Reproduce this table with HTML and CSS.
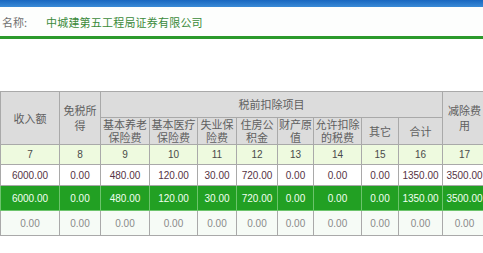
FILE: index.html
```html
<!DOCTYPE html>
<html lang="zh">
<head>
<meta charset="utf-8">
<link rel="stylesheet" href="styles.css">
</head>
<body>
<div class="topbar"></div>
<div class="namebar">
  <span class="label">名称:</span>
  <span class="company">中城建第五工程局证券有限公司</span>
</div>
<div class="rule"></div>
<div class="wrap">
<table class="grid">
  <colgroup>
    <col style="width:59px"><col style="width:41px"><col style="width:49px"><col style="width:48px">
    <col style="width:39px"><col style="width:41px"><col style="width:36px"><col style="width:48px">
    <col style="width:37px"><col style="width:44px"><col style="width:44px">
  </colgroup>
  <thead>
    <tr class="h1">
      <th rowspan="2">收入额</th>
      <th rowspan="2">免税所得</th>
      <th colspan="8">税前扣除项目</th>
      <th rowspan="2" class="wide">减除费用</th>
    </tr>
    <tr class="h2">
      <th>基本养老保险费</th>
      <th>基本医疗保险费</th>
      <th>失业保险费</th>
      <th>住房公积金</th>
      <th>财产原值</th>
      <th>允许扣除的税费</th>
      <th>其它</th>
      <th>合计</th>
    </tr>
    <tr class="nums">
      <td>7</td><td>8</td><td>9</td><td>10</td><td>11</td><td>12</td><td>13</td><td>14</td><td>15</td><td>16</td><td>17</td>
    </tr>
  </thead>
  <tbody>
    <tr class="r1">
      <td>6000.00</td><td>0.00</td><td>480.00</td><td>120.00</td><td>30.00</td><td>720.00</td><td>0.00</td><td>0.00</td><td>0.00</td><td>1350.00</td><td>3500.00</td>
    </tr>
    <tr class="sel">
      <td>6000.00</td><td>0.00</td><td>480.00</td><td>120.00</td><td>30.00</td><td>720.00</td><td>0.00</td><td>0.00</td><td>0.00</td><td>1350.00</td><td>3500.00</td>
    </tr>
    <tr class="r3">
      <td>0.00</td><td>0.00</td><td>0.00</td><td>0.00</td><td>0.00</td><td>0.00</td><td>0.00</td><td>0.00</td><td>0.00</td><td>0.00</td><td>0.00</td>
    </tr>
  </tbody>
</table>
</div>
</body>
</html>
```
FILE: styles.css
```css
html, body {
  margin: 0;
  padding: 0;
  background: #ffffff;
  overflow: hidden;
  width: 483px;
  height: 253px;
}
body {
  font-family: "Noto Sans CJK SC", "Liberation Sans", sans-serif;
}
.topbar {
  height: 7px;
  background: linear-gradient(#1967c0, #3a8ad6);
}
.namebar {
  height: 29px;
  display: flex;
  align-items: center;
  font-size: 11px;
  background: #fdfefd;
}
.label {
  color: #707070;
  padding-left: 2px;
  width: 44px;
}
.company {
  color: #3a8a3a;
  letter-spacing: 0.2px;
}
.rule {
  height: 3px;
  background: #2c9a2c;
}
.wrap {
  padding-top: 52px;
  width: 486px;
}
.grid {
  border-collapse: collapse;
  table-layout: fixed;
  width: 486px;
}
.grid th, .grid td {
  border: 1px solid #a9a9a9;
  text-align: center;
  padding: 0 1px;
  overflow: hidden;
}
.grid th {
  background: #dcdcdc;
  color: #606060;
  font-weight: normal;
  font-size: 11px;
  line-height: 13px;
}
.h1 th { height: 25px; }
.h1 th[rowspan] { line-height: 15px; }
.h2 th { height: 23px; word-break: break-all; }
.grid th.wide { padding: 0 4px; word-break: break-all; }
.grid td {
  font-family: "Liberation Sans", "DejaVu Sans", sans-serif;
  font-size: 10px;
}
.nums td {
  height: 19px;
  background: #eefadf;
  color: #4a4a4a;
}
.r1 td {
  height: 20px;
  color: #553344;
  background: #ffffff;
}
.sel td {
  height: 24px;
  background: #22a023;
  color: #f2fff2;
  border-color: #6cc46c;
}
.r3 td {
  height: 24px;
  background: #f6fbf6;
  color: #8a8a8a;
}
```
